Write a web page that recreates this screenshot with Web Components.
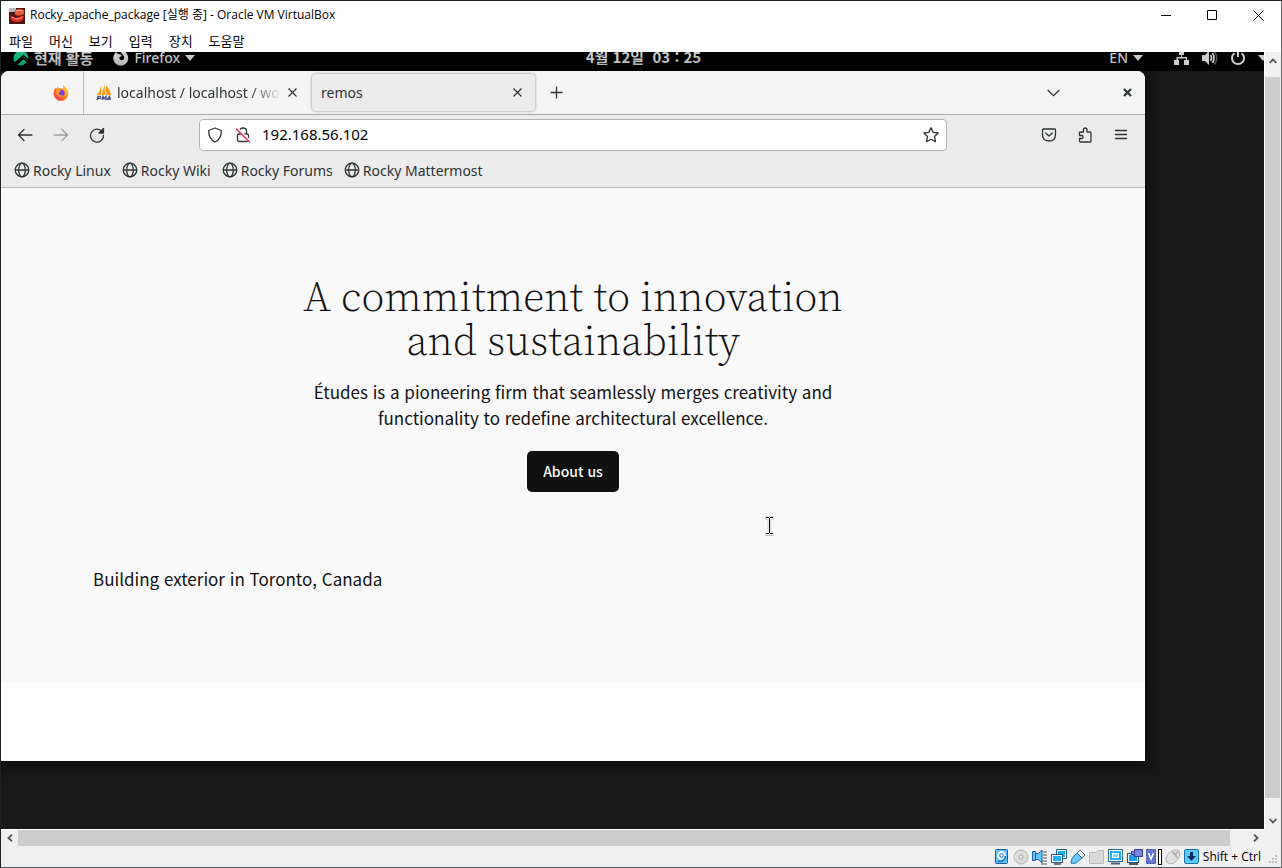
<!DOCTYPE html>
<html lang="ko">
<head>
<meta charset="utf-8">
<meta name="viewport" content="width=device-width, initial-scale=1">
<title>Rocky_apache_package [실행 중] - Oracle VM VirtualBox</title>
<style>
    body {
        margin: 0;
        font-family: "Open Sans", "Noto Sans CJK KR", sans-serif;
    }
</style>
</head>
<body>
<vbox-window>
    <vbox-titlebar slot="title">Rocky_apache_package [실행 중] - Oracle VM VirtualBox</vbox-titlebar>
    <vbox-menubar slot="menu"></vbox-menubar>
    <guest-screen>
        <gnome-topbar slot="topbar"></gnome-topbar>
        <firefox-window>
            <browser-tab slot="tabs" fade><pma-icon slot="icon"></pma-icon>localhost / localhost / wor</browser-tab>
            <browser-tab slot="tabs" active>remos</browser-tab>
            <browser-toolbar slot="toolbar" url="192.168.56.102"></browser-toolbar>
            <bookmark-link slot="bookmarks">Rocky Linux</bookmark-link>
            <bookmark-link slot="bookmarks">Rocky Wiki</bookmark-link>
            <bookmark-link slot="bookmarks">Rocky Forums</bookmark-link>
            <bookmark-link slot="bookmarks">Rocky Mattermost</bookmark-link>
            <site-hero></site-hero>
        </firefox-window>
    </guest-screen>
    <scroll-bar slot="vscroll" direction="vertical"></scroll-bar>
    <scroll-bar slot="hscroll" direction="horizontal"></scroll-bar>
    <vbox-statusbar slot="status"></vbox-statusbar>
</vbox-window>

<script>
// Registers an element whose shadow root is cloned from a template
function define(name, html, setup) {
    const template = document.createElement('template');
    template.innerHTML = html;

    customElements.define(name, class extends HTMLElement {
        connectedCallback() {
            if (this.shadowRoot) return;
            this.attachShadow({ mode: 'open' });
            this.shadowRoot.appendChild(template.content.cloneNode(true));
            if (setup) setup(this, this.shadowRoot);
        }
    });
}

// Shared reset for buttons and icons
const base = `
    * { box-sizing: border-box; }
    svg { display: block; flex: none; }
    button {
        display: flex;
        align-items: center;
        justify-content: center;
        margin: 0;
        padding: 0;
        border: 0;
        background: none;
        color: inherit;
        font: inherit;
        white-space: nowrap;
    }
`;

/* ---------- VirtualBox window ---------- */

define('vbox-window', `
    <style>
        ${base}
        :host {
            display: flex;
            flex-direction: column;
            box-sizing: border-box;
            min-height: 100vh;
            border: 1px solid #1b2326;
            border-right-color: #6b6b6b;
            border-bottom-color: #55585a;
            background: #f0f0f0;
            color: #000;
        }
        .view {
            flex: 1;
            display: grid;
            grid-template-columns: minmax(0, 1fr) 17px;
            grid-template-rows: minmax(0, 1fr) 17px;
        }
    </style>
    <slot name="title"></slot>
    <slot name="menu"></slot>
    <div class="view">
        <slot></slot>
        <slot name="vscroll"></slot>
        <slot name="hscroll"></slot>
    </div>
    <slot name="status"></slot>
`);

define('vbox-titlebar', `
    <style>
        ${base}
        :host {
            display: flex;
            align-items: center;
            height: 29px;
            padding-left: 8px;
            background: #fff;
            font-size: 12px;
            line-height: 16px;
        }
        .name {
            flex: 1;
            margin: 0 0 2px 5px;
            white-space: nowrap;
        }
        button { width: 46px; height: 29px; }
    </style>
    <svg width="16" height="16" viewBox="0 0 16 16">
        <rect width="16" height="16" fill="#4a1613"/>
        <rect x="0" y="0" width="7" height="4" fill="#b9b9b9"/>
        <path d="M6 2 Q11 0 15 2 L15 6 Q11 9 6 7 Z" fill="#e4573d"/>
        <path d="M1 7 Q5 11 10 9 Q14 7 15 8 L14 12 Q8 16 2 12 Z" fill="#e0301e"/>
        <path d="M3 9 Q8 13 13 9" fill="none" stroke="#f9a08c"/>
        <path d="M7 3 Q10 2 13 3" fill="none" stroke="#f8b4a2"/>
    </svg>
    <span class="name"><slot></slot></span>
    <button aria-label="최소화"><svg width="11" height="11" viewBox="0 0 11 11"><path d="M0 5.5H10" stroke="#000"/></svg></button>
    <button aria-label="최대화"><svg width="11" height="11" viewBox="0 0 11 11"><path d="M.5 .5H9.500V9.500H.5Z" fill="none" stroke="#000"/></svg></button>
    <button aria-label="닫기"><svg width="11" height="11" viewBox="0 0 11 11"><path d="M.5 .5L10.500 10.500M10.500 .5L.5 10.500" stroke="#000"/></svg></button>
`);

define('vbox-menubar', `
    <style>
        ${base}
        :host {
            display: flex;
            align-items: center;
            gap: 16px;
            height: 22px;
            padding-left: 8px;
            background: #fff;
            font-family: "Noto Sans CJK KR", sans-serif;
            font-size: 13px;
            line-height: 20px;
        }
    </style>
    <button>파일</button>
    <button>머신</button>
    <button>보기</button>
    <button>입력</button>
    <button>장치</button>
    <button>도움말</button>
`);

define('scroll-bar', `
    <style>
        ${base}
        :host {
            display: flex;
            background: #f0f0f0;
            color: #505050;
        }
        :host([direction="vertical"]) {
            flex-direction: column;
            border-left: 1px solid #fff;
            padding-right: 1px;
        }
        :host([direction="horizontal"]) {
            border-top: 1px solid #fff;
        }
        .thumb { flex: 1; background: #cdcdcd; }
        button { width: 17px; height: 16px; }
        :host([direction="vertical"]) .thumb { margin: 8px 0 14px; }
        :host([direction="horizontal"]) .thumb { margin-right: 17px; }
        :host([direction="vertical"]) button { width: 15px; height: 17px; }
        :host([direction="vertical"]) svg { transform: rotate(90deg); }
    </style>
    <button aria-label="이전"><svg width="8" height="8" viewBox="0 0 8 8"><path d="M6 .7L2.500 4L6 7.300" fill="none" stroke="currentColor" stroke-width="1.800"/></svg></button>
    <div class="thumb"></div>
    <button aria-label="다음"><svg width="8" height="8" viewBox="0 0 8 8"><path d="M2 .7L5.500 4L2 7.300" fill="none" stroke="currentColor" stroke-width="1.800"/></svg></button>
`);

define('vbox-statusbar', `
    <style>
        ${base}
        :host {
            display: flex;
            align-items: center;
            justify-content: flex-end;
            gap: 3px;
            height: 21px;
            padding-right: 2px;
            font-size: 12px;
            white-space: nowrap;
        }
        .key { margin-right: 5px; }
        .grip { align-self: flex-end; }
    </style>
    <!-- hard disk -->
    <svg width="16" height="16" viewBox="0 0 16 16"><rect x="1.500" y=".5" width="12" height="14" rx="1" fill="#5cc3ff" stroke="#1c5aa0"/><circle cx="7.500" cy="6.500" r="4.500" fill="#e8f7ff"/><circle cx="7.500" cy="6.500" r="1.800" fill="#fff" stroke="#1a6fc0"/><path d="M4 12.500L8 12Q11 11 11.500 7" fill="none" stroke="#1a6fc0" stroke-width="1.500"/></svg>
    <!-- optical disk -->
    <svg width="16" height="16" viewBox="0 0 16 16"><circle cx="8" cy="8" r="7" fill="#dcdcdc" stroke="#b5b5b5"/><circle cx="8" cy="8" r="2" fill="#eee" stroke="#aaa"/></svg>
    <!-- audio -->
    <svg width="16" height="16" viewBox="0 0 16 16"><path d="M11 3H15M11 6H15M11 9H15M10 12H15M9 15H15" stroke="#a5a5a5" stroke-width="2"/><path d="M.5 2.500H3.500V11.500H.5ZM3.500 4.500H6.500L10 1V14L6.500 10.500H3.500Z" fill="#64c8fa" stroke="#1b62a8"/></svg>
    <!-- network -->
    <svg width="16" height="16" viewBox="0 0 16 16"><path d="M5.500 .5H15.500V9.500H5.500Z" fill="#fff" stroke="#225c8f"/><path d="M7 2H14V8H7Z" fill="#23aef8"/><path d="M.5 5.500H11.500V13.500H.5Z" fill="#fff" stroke="#225c8f"/><path d="M2 7H10V12H2Z" fill="#23aef8"/><path d="M3 15H10" stroke="#777" stroke-width="2"/></svg>
    <!-- USB -->
    <svg width="16" height="16" viewBox="0 0 16 16"><path d="M10 1L15 6L12 9L7 4Z" fill="#f7f7f7" stroke="#5b7086"/><path d="M7 4L12 9L6 14Q2 15 1 14Q1 11 3 8Z" fill="#69c7fb" stroke="#2877b8"/></svg>
    <!-- shared folder -->
    <svg width="16" height="16" viewBox="0 0 16 16"><path d="M.5 3.500H7L9 1.500H14.500V14.500H.5Z" fill="#d9d9d9" stroke="#b9b9b9"/></svg>
    <!-- display -->
    <svg width="16" height="16" viewBox="0 0 16 16"><rect x=".5" y=".5" width="14" height="12" fill="#fff" stroke="#286392"/><rect x="2" y="2" width="11" height="9" fill="#23aef8"/><rect x="4.500" y="4.500" width="6" height="4" fill="#8cdcff" stroke="#fff"/><path d="M3 14.500H12" stroke="#4d6072" stroke-width="2"/></svg>
    <!-- recording -->
    <svg width="16" height="16" viewBox="0 0 16 16"><rect x=".5" y="4.500" width="11" height="9" fill="#fff" stroke="#26547f"/><rect x="2" y="6" width="8" height="6" fill="#169ef3"/><path d="M2 15H11" stroke="#555" stroke-width="2"/><rect x="7.500" y=".5" width="8" height="7" fill="#7c83e2" stroke="#343c96"/><rect x="4.500" y="2.500" width="3" height="3" fill="#8f96e9" stroke="#343c96"/></svg>
    <!-- CPU -->
    <svg width="16" height="16" viewBox="0 0 16 16"><rect x=".5" y=".5" width="9" height="14" fill="#6573d2" stroke="#2e3c99" stroke-dasharray="2 1"/><path d="M2.500 4L5 10L7.500 4" fill="none" stroke="#fff" stroke-width="1.500"/><rect x="12.500" y=".5" width="3" height="15" fill="#fff" stroke="#000"/></svg>
    <!-- mouse -->
    <svg width="16" height="16" viewBox="0 0 16 16"><path d="M2 7Q5 1 11 1Q15 1 15 5Q15 10 9 14Q4 16 2 13Q0 11 2 7Z" fill="#e1e1e1" stroke="#b2b2b2"/><path d="M7 3Q10 4 12 9M9.500 6L13 3" fill="none" stroke="#a8a8a8" stroke-width="1.500"/></svg>
    <!-- host key -->
    <svg width="16" height="16" viewBox="0 0 16 16"><rect x=".5" y=".5" width="14" height="14" rx="1.500" fill="#5fc9fb" stroke="#1a71aa"/><path d="M6 3H9V7H12L7.500 12L3 7H6Z" fill="#0b2d66"/></svg>
    <span class="key">Shift + Ctrl</span>
    <svg class="grip" width="10" height="12" viewBox="0 0 10 12"><path d="M6 0h2v2h-2zM3 3h2v2h-2zM6 3h2v2h-2zM0 6h2v2h-2zM3 6h2v2h-2zM6 6h2v2h-2z" fill="#bfbfbf"/></svg>
`);

/* ---------- Guest desktop ---------- */

define('guest-screen', `
    <style>
        ${base}
        :host {
            position: relative;
            display: flex;
            flex-direction: column;
            overflow: hidden;
            background: #19191a;
        }
        .desktop {
            flex: 1;
            display: flex;
            padding: 0 119px 68px 0;
        }
        ::slotted(firefox-window) { flex: 1; min-width: 0; }
        .pointer {
            position: absolute;
            left: 764px;
            top: 464px;
        }
    </style>
    <slot name="topbar"></slot>
    <div class="desktop"><slot></slot></div>
    <svg class="pointer" width="9" height="20" viewBox="0 0 9 20"><path d="M.5 2H8.500M.5 18H8.500M4.500 2V18" stroke="#b5b5b5" stroke-width="3.500"/><path d="M1 2H8M1 17.500H8M4.500 2V18" stroke="#fff" stroke-width="2.500"/><path d="M1 1.500H4M5 1.500H8M1 17.500H4M5 17.500H8M4.500 2V17" stroke="#000"/></svg>
`);

define('gnome-topbar', `
    <style>
        ${base}
        /* The bar is scrolled partly out of view, so its top is cut off */
        :host {
            display: flex;
            align-items: flex-end;
            height: 19px;
            overflow: hidden;
            background: #000;
            color: #ccc;
            font-family: "Noto Sans", "Noto Sans CJK KR", sans-serif;
            font-size: 14px;
            font-weight: 500;
        }
        .bar {
            flex: none;
            display: grid;
            grid-template-columns: 1fr auto 1fr;
            width: calc(100% + 22px);
            height: 27px;
            line-height: 26px;
        }
        .side { display: flex; align-items: center; }
        .left { gap: 20px; padding-left: 12px; }
        .right { justify-content: flex-end; gap: 12px; padding-right: 18px; }
        button { gap: 5px; height: 26px; }
        .korean { font-family: "Noto Sans CJK KR", sans-serif; font-size: 15px; font-weight: 700; }
        .lang { margin-right: 19px; }
    </style>
    <div class="bar">
        <div class="side left">
            <button class="korean">
                <svg width="16" height="16" viewBox="0 0 16 16"><path d="M1.700 12.300A7.500 7.500 0 1 1 14.800 11.200L10.500 7Z" fill="#10b981"/><path d="M2 13L10.500 5.500L16 11" fill="none" stroke="#000" stroke-width="1.500"/><path d="M4.500 14.700L10.500 9.200L13.500 12.200A7.500 7.500 0 0 1 4.500 14.700Z" fill="#10b981"/></svg>
                현재 활동
            </button>
            <button>
                <svg width="16" height="16" viewBox="0 0 16 16"><path d="M14 4A7.500 7.500 0 1 1 1.500 4L3 2L5 4Q8 4 9 6L6.500 7Q6 10 8.500 10.200Q11.500 10 11 6.500Q10 4 8 3L10 .5Q13 1.500 14 4Z" fill="#ccc"/></svg>
                Firefox
                <svg width="10" height="6" viewBox="0 0 10 6"><path d="M0 0H10L5 6Z" fill="#ccc"/></svg>
            </button>
        </div>
        <button class="korean">4월 12일&nbsp; 03 : 25</button>
        <div class="side right">
            <button class="lang">EN <svg width="10" height="6" viewBox="0 0 10 6"><path d="M0 0H10L5 6Z" fill="#ccc"/></svg></button>
            <svg width="16" height="16" viewBox="0 0 16 16"><path d="M5 0H10V5H8V7H13V10H15V15H10V10H12V8.500H4V10H5V15H0V10H2.500V7H7V5H5Z" fill="#ccc"/></svg>
            <svg width="16" height="16" viewBox="0 0 16 16"><path d="M0 5H3L7 1V15L3 11H0Z" fill="#ccc"/><path d="M8.500 5Q10.500 8 8.500 11M10.500 3Q13.500 8 10.500 13" fill="none" stroke="#ccc" stroke-width="1.700"/><path d="M12.500 1.500Q17 8 12.500 14.500" fill="none" stroke="#555" stroke-width="1.500"/></svg>
            <svg width="16" height="16" viewBox="0 0 16 16"><path d="M4.500 3.200A6 6 0 1 0 11.500 3.200M8 0V7" fill="none" stroke="#ccc" stroke-width="2"/></svg>
            <svg width="10" height="6" viewBox="0 0 10 6"><path d="M0 0H10L5 6Z" fill="#ccc"/></svg>
        </div>
    </div>
`);

/* ---------- Firefox ---------- */

define('firefox-window', `
    <style>
        ${base}
        :host {
            display: flex;
            flex-direction: column;
            border-radius: 8px 8px 0 0;
            overflow: hidden;
            background: #fff;
            color: #2e3436;
            font-family: "Noto Sans", sans-serif;
            font-size: 14px;
            box-shadow: 0 2px 14px 4px rgba(0, 0, 0, 0.5);
        }
        .tabs {
            display: flex;
            align-items: center;
            gap: 2px;
            height: 44px;
            background: #f4f4f4;
            border-bottom: 1px solid #ababab;
        }
        .view {
            width: 83px;
            height: 43px;
            padding-right: 14px;
            justify-content: flex-end;
            border-right: 1px solid #bdbdbd;
            margin-right: 1px;
        }
        .plus { width: 30px; height: 30px; margin-left: 4px; }
        .window-buttons { display: flex; gap: 38px; margin-left: auto; }
        .window-buttons button { width: 36px; height: 36px; }
        .bookmarks {
            display: flex;
            align-items: center;
            gap: 11px;
            height: 33px;
            padding: 0 0 2px 13px;
            background: #ebebeb;
            border-bottom: 1px solid #b8b8b8;
        }
    </style>
    <div class="tabs">
        <button class="view" aria-label="Firefox View">
            <svg width="16" height="16" viewBox="0 0 16 16">
                <defs><linearGradient id="fire" x1="1" y1="0" x2="0" y2="1"><stop offset="0" stop-color="#ffe23c"/><stop offset=".5" stop-color="#ff8a1d"/><stop offset="1" stop-color="#f5156c"/></linearGradient></defs>
                <path d="M10.500 0Q12 2 13.500 3.500Q15.500 6 15.500 8.500A7.500 7.500 0 0 1 .5 8.500Q.5 5 2.500 2.500L3 4L5 1.500L5.500 3.500Q8.500 2.500 10.500 4Q9.500 2 10.500 0Z" fill="url(#fire)"/>
                <circle cx="8.200" cy="8.200" r="3.400" fill="#7542e5"/>
                <path d="M3 5Q6 4 8 6L6 7.500Q5 9 7 10Q9 11 11 9.500Q9.500 13 6 11.500Q3 9.500 3 5Z" fill="#ff9a24"/>
            </svg>
        </button>
        <slot name="tabs"></slot>
        <button class="plus" aria-label="New tab"><svg width="13" height="13" viewBox="0 0 13 13"><path d="M6.500 .5V12.500M.5 6.500H12.500" stroke="#2e3436" stroke-width="1.300"/></svg></button>
        <div class="window-buttons">
            <button aria-label="List all tabs"><svg width="13" height="8" viewBox="0 0 13 8"><path d="M.7 1L6.500 6.700L12.300 1" fill="none" stroke="#2e3436" stroke-width="1.300"/></svg></button>
            <button aria-label="Close"><svg width="9" height="9" viewBox="0 0 9 9"><path d="M1 1L8 8M8 1L1 8" stroke="#2e3436" stroke-width="2.200"/></svg></button>
        </div>
    </div>
    <slot name="toolbar"></slot>
    <div class="bookmarks"><slot name="bookmarks"></slot></div>
    <slot></slot>
`);

define('pma-icon', `
    <style>
        ${base}
        :host { display: block; margin-right: 5px; }
    </style>
    <svg width="16" height="16" viewBox="0 0 16 16">
        <path d="M5 1Q6 5 5 10H1Q4 6 5 1ZM9 0Q8 5 9.500 10H6Q6.500 4 9 0ZM10 1Q14 4 15 10H10.500Q9 5 10 1Z" fill="#f89c0e"/>
        <path d="M1 15L2 11.500H4Q5.500 12 4 13.500H2M6 15L7 11.500L8 14L10 11.500V15M11 15L13.500 11.500L14.500 15M12 14H14.500" fill="none" stroke="#4b4f87" stroke-width="1.300"/>
    </svg>
`);

define('browser-tab', `
    <style>
        ${base}
        :host {
            display: flex;
            align-items: center;
            width: 223px;
            height: 37px;
            padding: 0 8px 0 9px;
            box-sizing: border-box;
            border-radius: 4px;
        }
        :host([active]) {
            background: #ebebeb;
            box-shadow: 0 0 3px rgba(0, 0, 0, 0.45);
        }
        .label {
            flex: 1;
            min-width: 0;
            height: 37px;
            justify-content: flex-start;
            overflow: hidden;
        }
        :host([fade]) .label {
            -webkit-mask-image: linear-gradient(to left, transparent, #000 32px);
            mask-image: linear-gradient(to left, transparent, #000 32px);
        }
        .close { width: 20px; height: 20px; }
    </style>
    <slot name="icon"></slot>
    <button class="label" role="tab"><slot></slot></button>
    <button class="close" aria-label="Close tab"><svg width="9" height="9" viewBox="0 0 9 9"><path d="M.5 .5L8.500 8.500M8.500 .5L.5 8.500" stroke="#2e3436" stroke-width="1.200"/></svg></button>
`);

define('browser-toolbar', `
    <style>
        ${base}
        :host {
            display: flex;
            align-items: center;
            height: 40px;
            padding: 0 6px;
            background: #ebebeb;
        }
        button { width: 36px; height: 32px; }
        .url {
            flex: 1;
            display: flex;
            align-items: center;
            height: 32px;
            margin: 0 84px;
            padding: 0 7px;
            border: 1px solid #b4b4b4;
            border-radius: 4px;
            background: #fff;
        }
        .url button { width: 16px; }
        .url button + button { margin-left: 12px; }
        input {
            flex: 1;
            min-width: 0;
            height: 28px;
            margin-left: 11px;
            padding: 0 0 2px;
            border: 0;
            outline: 0;
            background: none;
            color: #000;
            font: inherit;
            font-size: 15px;
        }
        .icon { fill: none; stroke: #2e3436; stroke-width: 1.3; stroke-linejoin: round; stroke-linecap: round; }
    </style>
    <button aria-label="Back"><svg class="icon" width="16" height="16" viewBox="0 0 16 16"><path d="M7 2.500L1.500 8L7 13.500M1.500 8H15"/></svg></button>
    <button aria-label="Forward" disabled><svg class="icon" width="16" height="16" viewBox="0 0 16 16" style="opacity: 0.4"><path d="M9 2.500L14.500 8L9 13.500M14.500 8H1"/></svg></button>
    <button aria-label="Reload"><svg class="icon" width="16" height="16" viewBox="0 0 16 16"><path d="M13 4.500A6.500 6.500 0 1 0 14.500 8.500"/><path d="M14.500 1.500V6H10Z" fill="#2e3436"/></svg></button>
    <div class="url">
        <button aria-label="Tracking protection"><svg class="icon" width="16" height="16" viewBox="0 0 16 16"><path d="M8 1L14.300 3.500Q14.500 12 8 15Q1.500 12 1.700 3.500Z"/></svg></button>
        <button aria-label="Connection not secure"><svg class="icon" width="16" height="16" viewBox="0 0 16 16"><path d="M4.500 7V4.500Q4.500 1 8 1Q11.500 1 11.500 4.500V7M4.500 7H12Q13.500 7 13.500 8.500V13Q13.500 14.500 12 14.500H4Q2.500 14.500 2.500 13V8.500Q2.500 7 4.500 7Z"/><path d="M2 1.500L15 14.500" stroke="#fff" stroke-width="3"/><path d="M1.500 2L14.500 15" stroke="#e22850" stroke-width="1.400"/></svg></button>
        <input type="text" aria-label="Address">
        <button aria-label="Bookmark this page"><svg class="icon" width="16" height="16" viewBox="0 0 16 16"><path d="M8 .8L10.200 5.400L15.200 6L11.500 9.500L12.500 14.700L8 12.200L3.500 14.700L4.500 9.500L.8 6L5.800 5.400Z"/></svg></button>
    </div>
    <button aria-label="Save to Pocket"><svg class="icon" width="16" height="16" viewBox="0 0 16 16"><path d="M2.500 2H13.500Q14.500 2 14.500 3V7.500Q14.500 14 8 14Q1.500 14 1.500 7.500V3Q1.500 2 2.500 2Z"/><path d="M4.700 6L8 9L11.300 6"/></svg></button>
    <button aria-label="Extensions"><svg class="icon" width="16" height="16" viewBox="0 0 16 16"><path d="M3 5H6.500V3Q6.500 1 8.200 1Q10 1 10 3V5H13Q14 5 14 6V14Q14 15 13 15H3.500Q2.500 15 2.500 14V11.500H5Q6 11 6 10Q6 8.500 5 8.500H2.500V6Q2.500 5 3 5Z"/></svg></button>
    <button aria-label="Menu"><svg class="icon" width="16" height="16" viewBox="0 0 16 16"><path d="M2.500 3.500H13.500M2.500 7.500H13.500M2.500 11.500H13.500"/></svg></button>
`, (host, root) => {
    root.querySelector('input').value = host.getAttribute('url');
});

define('bookmark-link', `
    <style>
        ${base}
        :host { display: block; }
        a {
            display: flex;
            align-items: center;
            gap: 3px;
            color: inherit;
            text-decoration: none;
            white-space: nowrap;
        }
    </style>
    <a href="#">
        <svg width="16" height="16" viewBox="0 0 16 16"><g fill="none" stroke="#2e3436" stroke-width="1.300"><circle cx="8" cy="8" r="6.800"/><ellipse cx="8" cy="8" rx="3.300" ry="6.800"/><path d="M1 8H15"/></g></svg>
        <slot></slot>
    </a>
`);

/* ---------- Web page ---------- */

define('site-hero', `
    <style>
        ${base}
        :host {
            display: flex;
            flex-direction: column;
            align-items: center;
            padding: 86px 92px 91px;
            background: #f9f9f9;
            color: #111;
            font-family: "Noto Sans CJK KR", sans-serif;
            font-size: 17px;
            line-height: 26px;
            text-align: center;
        }
        h1 {
            max-width: 600px;
            margin: 0 0 17px;
            font-family: "Source Serif 4", "Source Serif Pro", "Liberation Serif", serif;
            font-size: 42px;
            font-weight: 300;
            line-height: 44px;
        }
        p { max-width: 530px; margin: 0; }
        a {
            margin: 20px 0 74px;
            padding: 8px 16px;
            border-radius: 5px;
            background: #111;
            color: #f9f9f9;
            font-size: 14px;
            font-weight: 500;
            line-height: 25px;
            text-decoration: none;
        }
        figcaption { align-self: flex-start; }
    </style>
    <h1>A commitment to innovation and sustainability</h1>
    <p>Études is a pioneering firm that seamlessly merges creativity and functionality to redefine architectural excellence.</p>
    <a href="#">About us</a>
    <figcaption>Building exterior in Toronto, Canada</figcaption>
`);
</script>
</body>
</html>
